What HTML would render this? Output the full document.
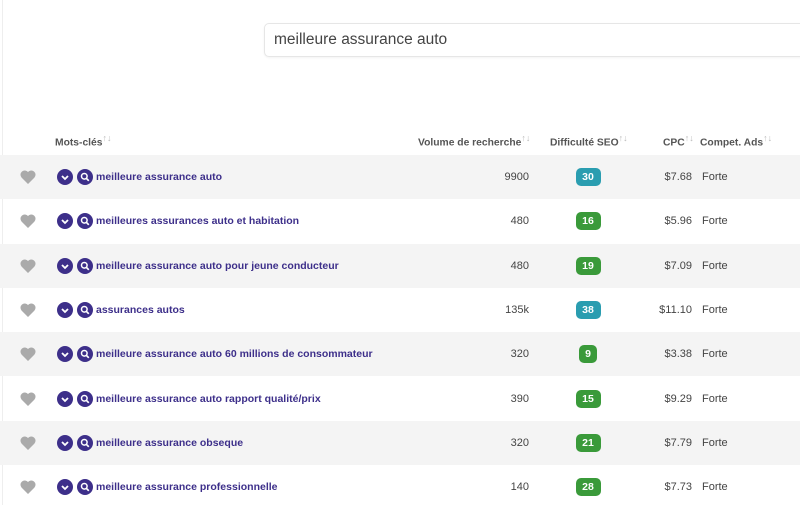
<!DOCTYPE html>
<html><head><meta charset="utf-8"><style>
*{margin:0;padding:0;box-sizing:border-box}
body{width:800px;height:505px;background:#fff;font-family:"Liberation Sans",sans-serif;position:relative;overflow:hidden}
.search{position:absolute;left:264px;top:23px;width:560px;height:34px;border:1px solid #e6e6e6;border-radius:5px;background:#fff;font-size:15.5px;color:#444;padding:7px 9px;box-shadow:0 1px 2px rgba(0,0,0,.05)}
.lb{position:absolute;left:2px;top:0;width:1px;height:505px;background:#eee}
.h{position:absolute;top:133px;font-size:10.3px;font-weight:bold;color:#555}
.h sup{color:#bbb;font-weight:normal;font-size:9px}
.row{position:absolute;left:0;width:800px;height:44.3px}
.row.g{background:#f4f4f4}
.heart{position:absolute;left:20px;top:15px}
.c{position:absolute;top:14px;width:16px;height:16px;border-radius:50%;background:#3d2f8a}
.kw{position:absolute;left:96px;top:16px;font-size:10.5px;font-weight:bold;color:#3d2f8a}
.vol{position:absolute;right:271px;top:16px;font-size:11px;color:#444}
.b{position:absolute;left:576px;top:13px;width:25px;height:18px;border-radius:5px;color:#fff;font-size:10.5px;font-weight:bold;text-align:center;line-height:18px}
.t{background:#2a9db0}.gr{background:#3a9a3a}
.cpc{position:absolute;right:108px;top:16px;font-size:11px;color:#444}
.f{position:absolute;left:702px;top:16px;font-size:11px;color:#444}
</style></head><body>
<div class="lb"></div>
<div class="search">meilleure assurance auto</div>
<div class="h" style="left:55px">Mots-clés<sup>↑↓</sup></div>
<div class="h" style="left:418px">Volume de recherche<sup>↑↓</sup></div>
<div class="h" style="left:550px">Difficulté SEO<sup>↑↓</sup></div>
<div class="h" style="left:663px">CPC<sup>↑↓</sup></div>
<div class="h" style="left:700px">Compet. Ads<sup>↑↓</sup></div>
<div id="rows"></div>
<script>
var d=[["meilleure assurance auto","9900","30","t","$7.68"],["meilleures assurances auto et habitation","480","16","gr","$5.96"],["meilleure assurance auto pour jeune conducteur","480","19","gr","$7.09"],["assurances autos","135k","38","t","$11.10"],["meilleure assurance auto 60 millions de consommateur","320","9","gr","$3.38"],["meilleure assurance auto rapport qualité/prix","390","15","gr","$9.29"],["meilleure assurance obseque","320","21","gr","$7.79"],["meilleure assurance professionnelle","140","28","gr","$7.73"]];
var h="";
d.forEach(function(r,i){
var w=r[2].length==1?18:25,l=588-w/2;
h+='<div class="row'+(i%2==0?' g':'')+'" style="top:'+(155+i*44.3)+'px">'+
'<svg class="heart" width="16" height="14" viewBox="0 0 16 14"><path d="M8 14L1.5 7.5A4 4 0 0 1 8 2a4 4 0 0 1 6.5 5.5z" fill="#aaa"/></svg>'+
'<div class="c" style="left:57px"><svg width="16" height="16"><path d="M5 7l3 3 3-3" stroke="#fff" stroke-width="1.8" fill="none"/></svg></div>'+
'<div class="c" style="left:77px"><svg width="16" height="16"><circle cx="7.3" cy="7.3" r="2.8" stroke="#fff" stroke-width="1.5" fill="none"/><path d="M9.3 9.3l2.5 2.5" stroke="#fff" stroke-width="1.7"/></svg></div>'+
'<div class="kw">'+r[0]+'</div><div class="vol">'+r[1]+'</div>'+
'<div class="b '+r[3]+'" style="left:'+l+'px;width:'+w+'px">'+r[2]+'</div>'+
'<div class="cpc">'+r[4]+'</div><div class="f">Forte</div></div>';
});
document.getElementById("rows").innerHTML=h;
</script>
</body></html>
